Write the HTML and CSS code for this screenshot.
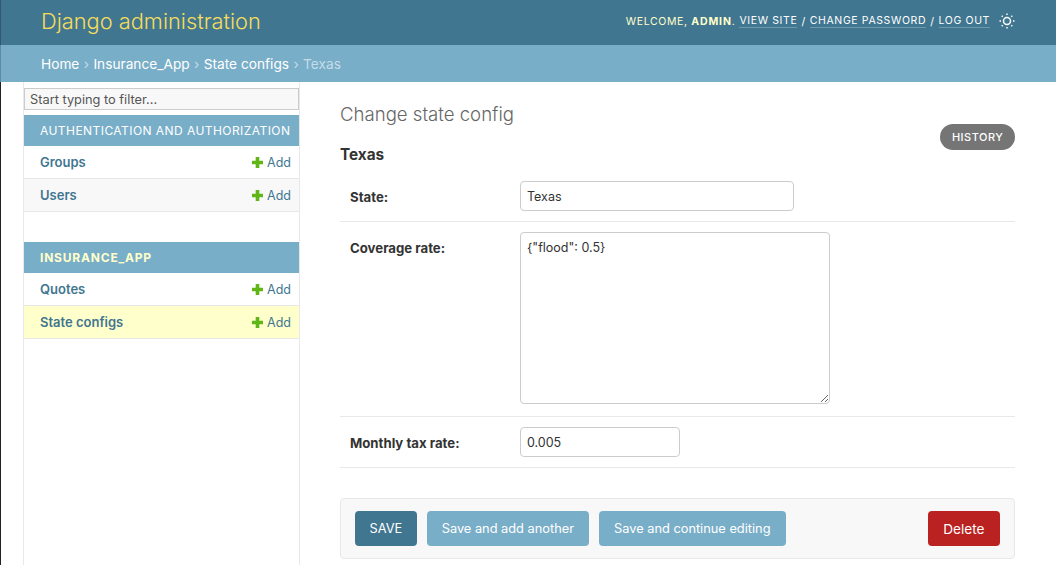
FILE: index.html
```html
<!DOCTYPE html>
<html lang="en">
<head>
<meta charset="utf-8">
<title>Change state config</title>
<link rel="stylesheet" href="styles.css">
</head>
<body>
<header class="header">
  <div class="brand">Django administration</div>
  <div class="tools">
    <span>WELCOME, <strong>ADMIN</strong>.</span>
    <a href="#">VIEW SITE</a> <span class="sep">/</span>
    <a href="#">CHANGE PASSWORD</a> <span class="sep">/</span>
    <a href="#">LOG OUT</a>
    <svg class="theme" width="16" height="16" viewBox="0 0 16 16" fill="none" stroke="#fff">
      <circle cx="8" cy="8" r="3.500" stroke-width="1.500"/>
      <path stroke-width="1.400" d="M8 .5v1.500M8 14v1.500M.5 8H2M14 8h1.500M2.700 2.700l1 1M12.300 12.300l1 1M2.700 13.300l1-1M12.300 3.700l1-1"/>
    </svg>
  </div>
</header>
<nav class="crumbs">
  <a href="#">Home</a> <i>›</i> <a href="#">Insurance_App</a> <i>›</i> <a href="#">State configs</a> <i>›</i> <span class="current">Texas</span>
</nav>
<div class="main">
  <aside class="sidebar">
    <input class="filter" placeholder="Start typing to filter...">
    <section class="module">
      <h2 class="caption">AUTHENTICATION AND AUTHORIZATION</h2>
      <div class="row"><a class="model" href="#">Groups</a><a class="add" href="#"><svg class="plus" viewBox="0 0 11 11"><path d="M3.700 0h3.600v3.700H11v3.600H7.300V11H3.700V7.300H0V3.700h3.700z"/></svg>Add</a></div>
      <div class="row alt"><a class="model" href="#">Users</a><a class="add" href="#"><svg class="plus" viewBox="0 0 11 11"><path d="M3.700 0h3.600v3.700H11v3.600H7.300V11H3.700V7.300H0V3.700h3.700z"/></svg>Add</a></div>
    </section>
    <section class="module">
      <h2 class="caption current-app">INSURANCE_APP</h2>
      <div class="row"><a class="model" href="#">Quotes</a><a class="add" href="#"><svg class="plus" viewBox="0 0 11 11"><path d="M3.700 0h3.600v3.700H11v3.600H7.300V11H3.700V7.300H0V3.700h3.700z"/></svg>Add</a></div>
      <div class="row selected"><a class="model" href="#">State configs</a><a class="add" href="#"><svg class="plus" viewBox="0 0 11 11"><path d="M3.700 0h3.600v3.700H11v3.600H7.300V11H3.700V7.300H0V3.700h3.700z"/></svg>Add</a></div>
    </section>
  </aside>
  <main class="content">
    <div class="title-row">
      <div class="titles">
        <h1 class="title">Change state config</h1>
        <h2 class="object">Texas</h2>
      </div>
      <a class="history" href="#">HISTORY</a>
    </div>
    <div class="form-row">
      <label class="label">State:</label>
      <input class="field state" value="Texas">
    </div>
    <div class="form-row tall">
      <label class="label">Coverage rate:</label>
      <textarea class="field coverage">{"flood": 0.5}</textarea>
    </div>
    <div class="form-row">
      <label class="label">Monthly tax rate:</label>
      <input class="field tax" value="0.005">
    </div>
    <div class="submit-row">
      <button class="btn primary">SAVE</button>
      <button class="btn">Save and add another</button>
      <button class="btn">Save and continue editing</button>
      <a class="btn delete" href="#">Delete</a>
    </div>
  </main>
</div>
</body>
</html>
```

FILE: styles.css
```css
* { box-sizing: border-box; }
html, body { height: 100%; }
body {
  margin: 0;
  overflow: hidden;
  background: #fff;
  color: #333;
  font-family: Inter, "Liberation Sans", sans-serif;
  font-size: 13px;
}
a { text-decoration: none; }
.header {
  height: 45px;
  padding: 0 41px 3px 40px;
  background: #417690;
  border-left: 1px solid #2f5a70;
  display: flex;
  justify-content: space-between;
  align-items: center;
}
.brand { color: #f5dd5d; font-size: 21.800px; font-weight: 300; }
.tools {
  display: flex;
  align-items: center;
  gap: 4px;
  color: #ffc;
  font-size: 10.500px;
  letter-spacing: 0.62px;
}
.tools strong { font-weight: 700; letter-spacing: 0.9px; }
.tools a { color: #fff; border-bottom: 1px solid rgba(255,255,255,.25); line-height: 13px; }
.sep { color: #fff; }
.theme { margin-left: 5px; }
.crumbs {
  height: 37px;
  padding: 0 40px;
  background: #79aec8;
  border-left: 1px solid #5d8ba1;
  color: #c4dce8;
  display: flex;
  align-items: center;
  gap: 4.400px;
  font-size: 13.700px;
  white-space: pre;
}
.crumbs a { color: #fff; }
.crumbs i { font-style: normal; }
.crumbs .current { color: #c4dce8; }
.main { display: flex; padding-left: 22px; height: 483px; border-left: 1px solid #222; }
.sidebar {
  width: 277px;
  flex: none;
  border-left: 1px solid #e8e8e8;
  border-right: 1px solid #e8e8e8;
  padding-top: 6px;
}
.filter {
  display: block;
  width: 100%;
  height: 22px;
  padding: 0 5px;
  border: 1px solid #ccc;
  background: #f8f8f8;
  font: 12.800px Inter, "Liberation Sans", sans-serif;
  margin-bottom: 5px;
}
.filter::placeholder { color: #555; opacity: 1; }
.module { margin-bottom: 30px; }
.caption {
  margin: 0;
  height: 31px;
  padding: 0 8px 0 16px;
  background: #79aec8;
  color: #fff;
  display: flex;
  align-items: center;
  font-size: 12px;
  font-weight: 400;
  letter-spacing: 0.44px;
  white-space: nowrap;
}
.current-app { color: #ffc; font-weight: 700; letter-spacing: 0.8px; }
.row {
  height: 33px;
  padding: 0 8px 0 16px;
  display: flex;
  justify-content: space-between;
  align-items: center;
  border-bottom: 1px solid #e8e8e8;
  background: #fff;
}
.row.alt { background: #f8f8f8; }
.row.selected { background: #ffc; }
.model { color: #417690; font-weight: 600; font-size: 13px; }
.add { color: #417690; display: flex; align-items: center; gap: 4px; font-size: 12.500px; }
.plus { width: 11px; height: 11px; fill: #5fb616; }
.content { flex: 1; min-width: 0; padding: 20px 41px 0 40px; }
.title-row { display: flex; justify-content: space-between; align-items: flex-start; height: 69px; }
.title { margin: 0; font-size: 18.600px; font-weight: 300; color: #666; line-height: 24px; }
.object { margin: 20px 0 0; font-size: 15.300px; font-weight: 700; color: #333; line-height: 18px; }
.history {
  margin-top: 22px;
  height: 26px;
  padding: 0 11.500px;
  border-radius: 13px;
  background: #757575;
  color: #fff;
  display: flex;
  align-items: center;
  font-size: 11px;
  font-weight: 500;
  letter-spacing: 0.5px;
}
.form-row {
  display: flex;
  align-items: flex-start;
  padding: 10px;
  border-bottom: 1px solid #e8e8e8;
}
.form-row.tall { padding-bottom: 12px; }
.label { width: 170px; flex: none; font-weight: 700; font-size: 13.200px; padding-top: 8px; color: #333; }
.field {
  display: block;
  padding: 0 6px;
  border: 1px solid #ccc;
  border-radius: 4px;
  background: #fff;
  color: #333;
  font: 12.500px Inter, "Liberation Sans", sans-serif;
}
.state { width: 274px; height: 30px; }
.coverage { width: 310px; height: 172px; padding-top: 7px; }
.tax { width: 160px; height: 30px; }
.submit-row {
  margin-top: 30px;
  height: 61px;
  padding: 0 14px;
  display: flex;
  align-items: center;
  gap: 10px;
  background: #f8f8f8;
  border: 1px solid #e8e8e8;
  border-radius: 4px;
}
.btn {
  height: 35px;
  padding: 0 15px;
  border: 0;
  border-radius: 4px;
  background: #79aec8;
  color: #fff;
  display: flex;
  align-items: center;
  font: 12.800px Inter, "Liberation Sans", sans-serif;
}
.primary { background: #417690; padding: 0 14.500px; }
.delete { background: #ba2121; margin-left: auto; font-size: 13.600px; padding: 0 15.500px; }
```
